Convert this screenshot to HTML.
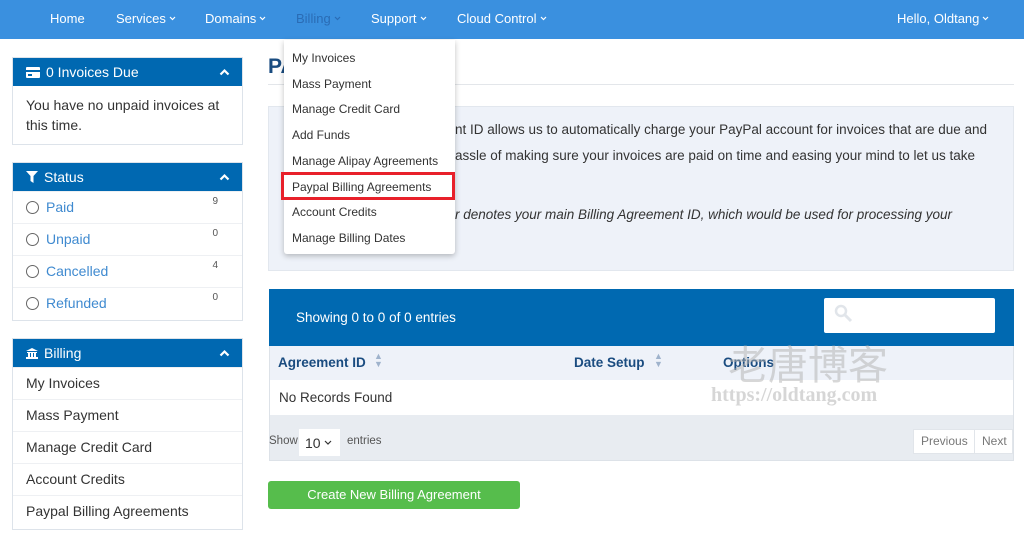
<!DOCTYPE html>
<html><head><meta charset="utf-8"><style>
*{box-sizing:border-box;margin:0;padding:0}
body{width:1024px;height:539px;overflow:hidden;background:#fff;font-family:"Liberation Sans",Arial,sans-serif;position:relative;color:#333}
.a{position:absolute;white-space:nowrap}
.nav{position:absolute;left:0;top:0;width:1024px;height:39px;background:#3a90df}
.nav span{position:absolute;top:11px;color:#fff;font-size:13px}
.nav svg{margin-left:3px;vertical-align:2px}
.panel{position:absolute;left:12px;width:231px;border:1px solid #dde3ea;background:#fff}
.ph{height:28px;background:#0068b1;color:#fff;font-size:14px;line-height:28px;padding-left:13px;position:relative}
.ph .up{position:absolute;right:12px;top:10px}
.row{height:32px;border-top:1px solid #eef0f3;font-size:14px;line-height:31px;padding-left:13px;position:relative}
.row:first-of-type{border-top:none}
.st{color:#3f8ad0}
.rad{display:inline-block;width:13px;height:13px;border:1.5px solid #666;border-radius:50%;vertical-align:-2px;margin-right:7px}
.cnt{position:absolute;right:24px;top:-6px;font-size:10px;color:#555}
.dd{position:absolute;left:284px;top:40px;width:171px;height:214px;background:#fff;box-shadow:0 2px 6px rgba(0,0,0,.25);border-radius:0 0 3px 3px}
.dd div{position:absolute;left:8px;font-size:12px;color:#333}
.info{position:absolute;left:268px;top:106px;width:746px;height:165px;background:#eef2f9;border:1px solid #e2e7ee}
.info .a{font-size:13.5px;color:#333}
</style></head><body>
<div class="nav">
<span style="left:50px">Home</span>
<span style="left:116px">Services<svg width="7" height="5"><path d="M1 1l2.5 2.5L6 1" stroke="#fff" fill="none" stroke-width="1.2"/></svg></span>
<span style="left:205px">Domains<svg width="7" height="5"><path d="M1 1l2.5 2.5L6 1" stroke="#fff" fill="none" stroke-width="1.2"/></svg></span>
<span style="left:296px;color:#2a6cb5">Billing<svg width="7" height="5"><path d="M1 1l2.5 2.5L6 1" stroke="#2a6cb5" fill="none" stroke-width="1.2"/></svg></span>
<span style="left:371px">Support<svg width="7" height="5"><path d="M1 1l2.5 2.5L6 1" stroke="#fff" fill="none" stroke-width="1.2"/></svg></span>
<span style="left:457px">Cloud Control<svg width="7" height="5"><path d="M1 1l2.5 2.5L6 1" stroke="#fff" fill="none" stroke-width="1.2"/></svg></span>
<span style="left:897px">Hello, Oldtang<svg width="7" height="5"><path d="M1 1l2.5 2.5L6 1" stroke="#fff" fill="none" stroke-width="1.2"/></svg></span>
</div>

<div class="panel" style="top:57px;height:88px">
<div class="ph"><svg width="14" height="11" style="margin-right:6px;vertical-align:-1px"><rect x="0" y="0" width="14" height="11" rx="1" fill="#fff"/><rect x="0" y="3" width="14" height="2" fill="#0068b1"/><rect x="2" y="7" width="4" height="2" fill="#0068b1"/></svg>0 Invoices Due<svg class="up" width="11" height="8"><path d="M1.5 6.5L5.5 2.5L9.5 6.5" stroke="#fff" fill="none" stroke-width="2.2"/></svg></div>
<div style="padding:9px 13px;font-size:14px;line-height:20px">You have no unpaid invoices at this time.</div>
</div>

<div class="panel" style="top:162px;height:159px">
<div class="ph"><svg width="12" height="12" style="margin-right:6px;vertical-align:-1px"><path d="M0 0H12L7.5 5V12L4.5 10V5Z" fill="#fff"/></svg>Status<svg class="up" width="11" height="8"><path d="M1.5 6.5L5.5 2.5L9.5 6.5" stroke="#fff" fill="none" stroke-width="2.2"/></svg></div>
<div class="row st"><span class="rad"></span>Paid<span class="cnt">9</span></div>
<div class="row st"><span class="rad"></span>Unpaid<span class="cnt">0</span></div>
<div class="row st"><span class="rad"></span>Cancelled<span class="cnt">4</span></div>
<div class="row st"><span class="rad"></span>Refunded<span class="cnt">0</span></div>
</div>

<div class="panel" style="top:338px;height:192px">
<div class="ph"><svg width="12" height="11" style="margin-right:6px;vertical-align:-1px"><path d="M6 0L12 3H0Z M1 4H11V5H1Z M2 5H4V9H2Z M5 5H7V9H5Z M8 5H10V9H8Z M0 9H12V11H0Z" fill="#fff"/></svg>Billing<svg class="up" width="11" height="8"><path d="M1.5 6.5L5.5 2.5L9.5 6.5" stroke="#fff" fill="none" stroke-width="2.2"/></svg></div>
<div class="row">My Invoices</div>
<div class="row">Mass Payment</div>
<div class="row">Manage Credit Card</div>
<div class="row">Account Credits</div>
<div class="row">Paypal Billing Agreements</div>
</div>

<div class="a" style="left:268px;top:55px;font-size:21px;font-weight:bold;color:#1a4c80">PA</div>
<div class="a" style="left:268px;top:84px;width:746px;height:1px;background:#e3e6ea"></div>

<div class="info">
<div class="a" style="left:186px;top:15px">nt ID allows us to automatically charge your PayPal account for invoices that are due and</div>
<div class="a" style="left:186px;top:41px">assle of making sure your invoices are paid on time and easing your mind to let us take</div>
<div class="a" style="left:186px;top:100px;font-style:italic">r denotes your main Billing Agreement ID, which would be used for processing your</div>
</div>

<div class="a" style="left:269px;top:289px;width:745px;height:172px;background:#e8ecf1;border:1px solid #dde2e8"></div>
<div class="a" style="left:269px;top:289px;width:745px;height:57px;background:#0069b1"></div>
<div class="a" style="left:296px;top:310px;color:#fff;font-size:13.5px">Showing 0 to 0 of 0 entries</div>
<div class="a" style="left:824px;top:298px;width:171px;height:35px;background:#fff;border-radius:2px"></div>
<svg class="a" style="left:834px;top:304px" width="20" height="20"><circle cx="7" cy="7" r="5" fill="none" stroke="#e1e5ea" stroke-width="2.5"/><path d="M11 11l6 6" stroke="#e1e5ea" stroke-width="3"/></svg>
<div class="a" style="left:270px;top:346px;width:743px;height:34px;background:#eef2f9"></div>
<div class="a" style="left:278px;top:355px;font-size:13.5px;font-weight:bold;color:#1a4c80">Agreement ID</div>
<div class="a" style="left:374px;top:352px;font-size:9px;color:#9fb3cc;line-height:8px">▲<br>▼</div>
<div class="a" style="left:574px;top:355px;font-size:13.5px;font-weight:bold;color:#1a4c80">Date Setup</div>
<div class="a" style="left:654px;top:352px;font-size:9px;color:#9fb3cc;line-height:8px">▲<br>▼</div>
<div class="a" style="left:723px;top:355px;font-size:13.5px;font-weight:bold;color:#1a4c80">Options</div>
<div class="a" style="left:270px;top:380px;width:743px;height:35px;background:#fff"></div>
<div class="a" style="left:279px;top:390px;font-size:13.5px">No Records Found</div>
<div class="a" style="left:269px;top:435px;font-size:11.5px;color:#555">Show</div>
<div class="a" style="left:299px;top:429px;width:41px;height:27px;background:#fff;font-size:14px;padding:6px 0 0 6px">10 <svg width="8" height="6" style="vertical-align:2px"><path d="M1 1l3 3 3-3" stroke="#333" fill="none" stroke-width="1.2"/></svg></div>
<div class="a" style="left:347px;top:435px;font-size:11.5px;color:#555">entries</div>
<div class="a" style="left:913px;top:429px;width:100px;height:25px;background:#fff;border:1px solid #e1e5ea;font-size:12px;color:#777;line-height:23px"><span style="padding-left:7px">Previous</span><span style="position:absolute;left:60px;top:0;height:23px;border-left:1px solid #e1e5ea;padding-left:7px">Next</span></div>

<div class="a" style="left:728px;top:338px;font-size:40px;color:rgba(175,175,175,.5);font-family:'Noto Sans CJK SC',sans-serif;line-height:48px">老唐博客</div>
<div class="a" style="left:711px;top:384px;font-size:20px;font-weight:bold;color:rgba(180,180,180,.55);font-family:'Liberation Serif',serif">https://oldtang.com</div>

<div class="a" style="left:268px;top:481px;width:252px;height:28px;background:#56bd4c;border-radius:3px;color:#fff;font-size:13px;text-align:center;line-height:28px">Create New Billing Agreement</div>

<div class="dd">
<div style="top:11px">My Invoices</div>
<div style="top:37px">Mass Payment</div>
<div style="top:62px">Manage Credit Card</div>
<div style="top:88px">Add Funds</div>
<div style="top:114px">Manage Alipay Agreements</div>
<div style="top:140px">Paypal Billing Agreements</div>
<div style="top:165px">Account Credits</div>
<div style="top:191px">Manage Billing Dates</div>
</div>
<div class="a" style="left:281px;top:172px;width:174px;height:28px;border:3px solid #e8202a"></div>
</body></html>
